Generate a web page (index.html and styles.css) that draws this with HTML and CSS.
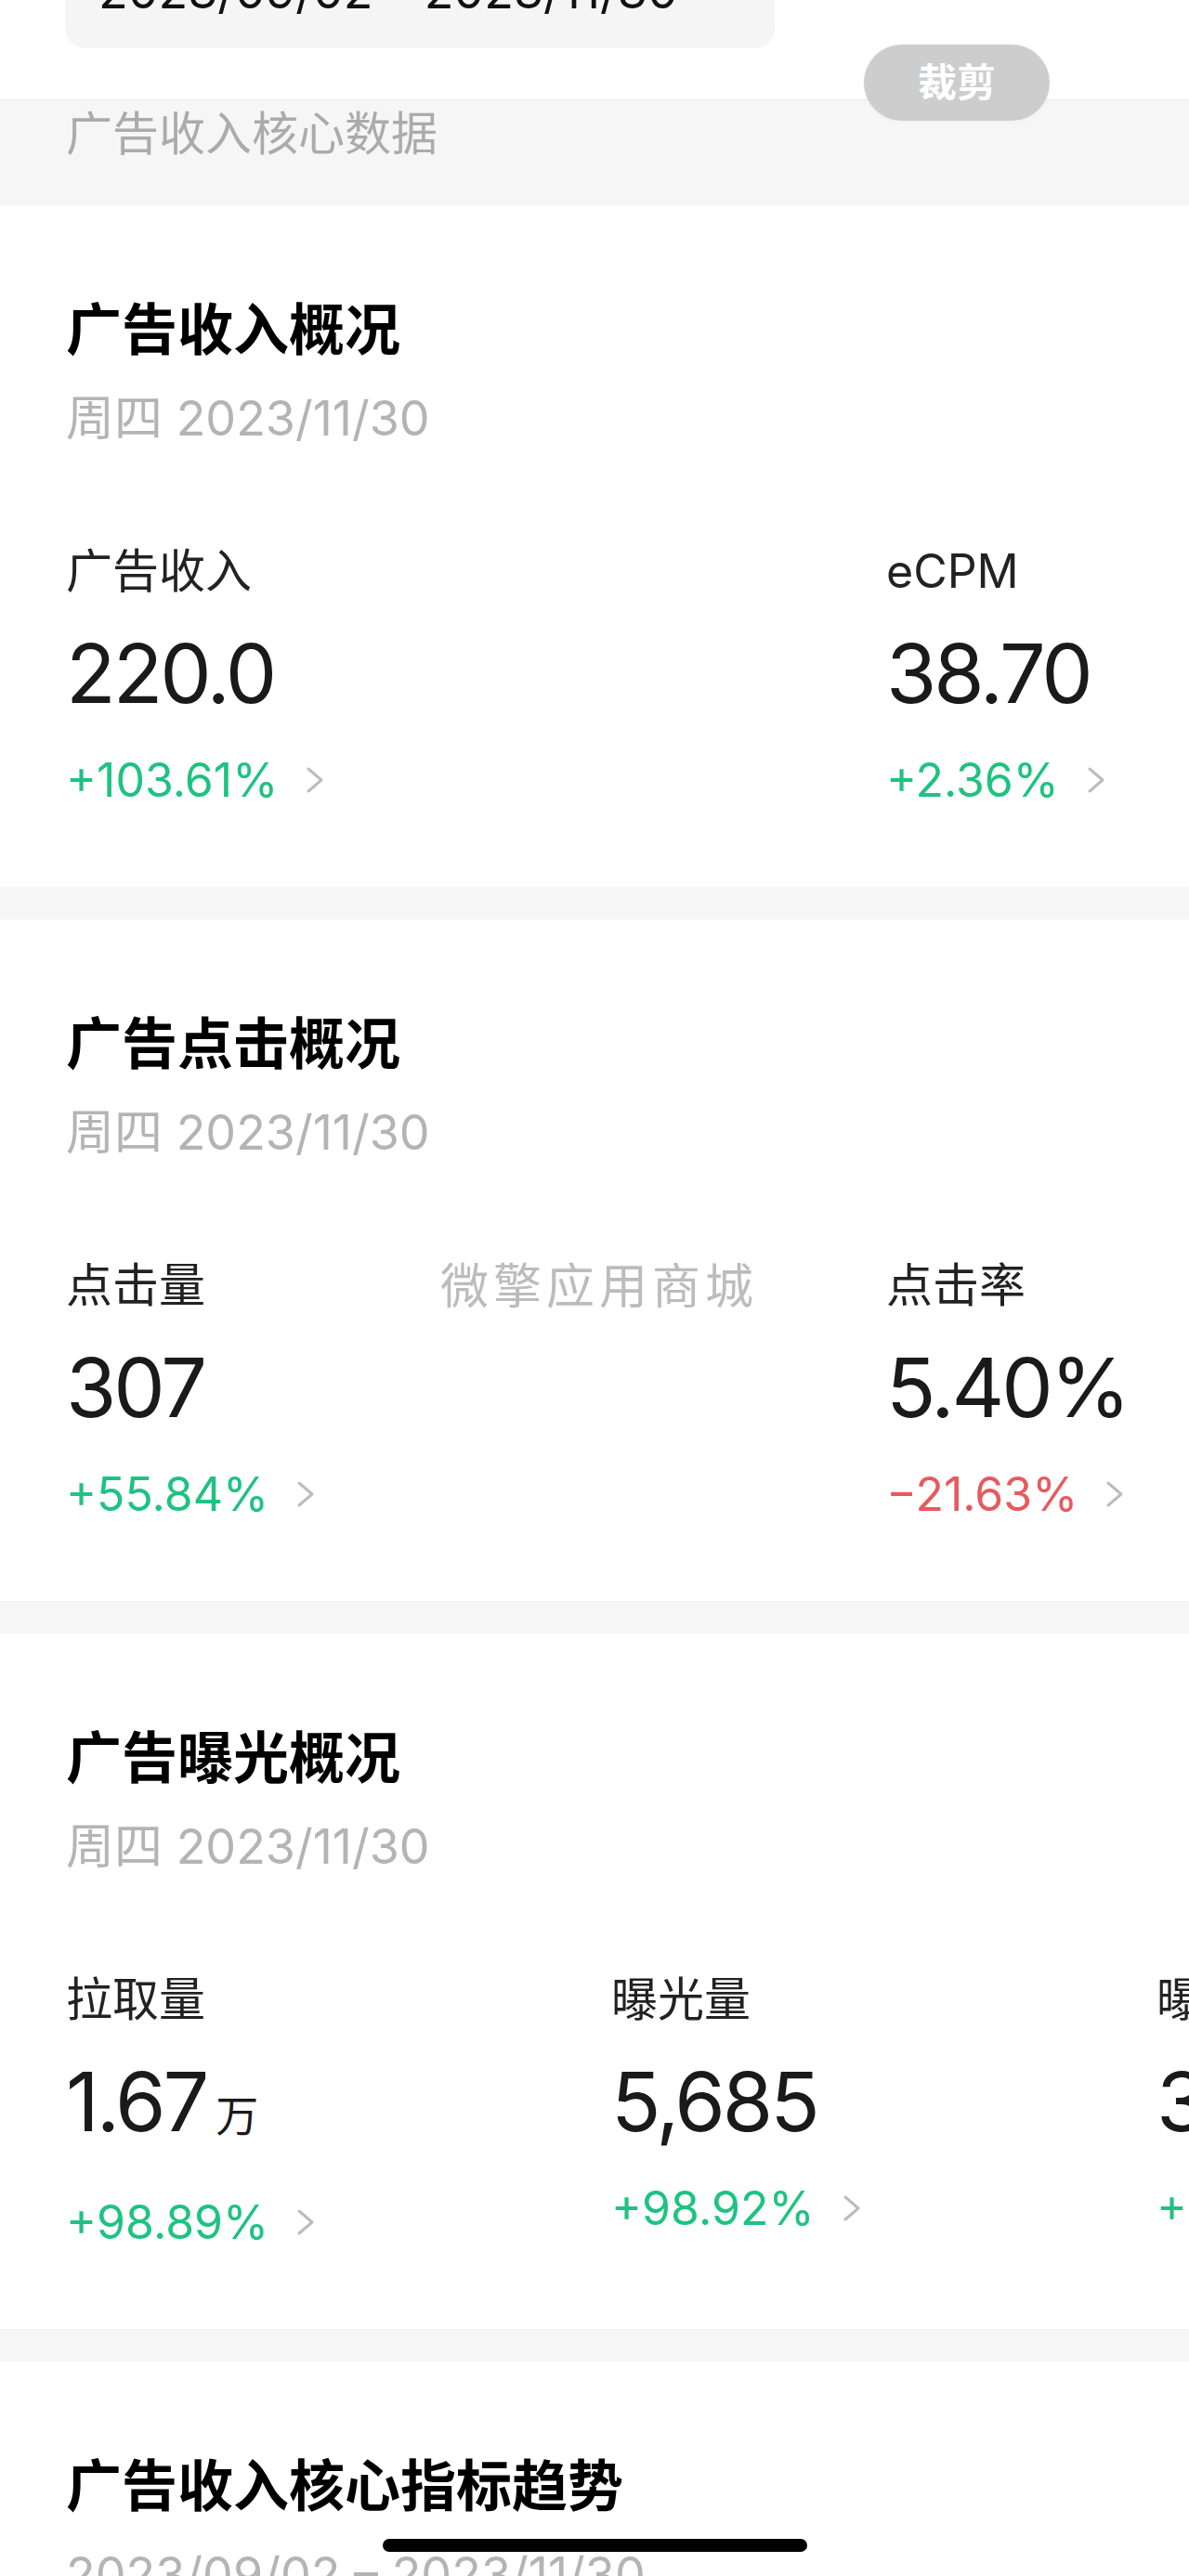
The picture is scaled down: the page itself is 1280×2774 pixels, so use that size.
FILE: index.html
```html
<!DOCTYPE html>
<html lang="zh-CN">

<head>
    <meta charset="UTF-8">
    <meta name="viewport" content="width=device-width, initial-scale=1.0">
    <title>广告收入核心数据</title>
    <link rel="stylesheet" href="styles.css">
</head>

<body>
    <div class="page">
        <div class="range">
            <div class="range-pill">2023/09/02 – 2023/11/30</div>
        </div>
        <div class="crop-btn">裁剪</div>

        <div class="band">广告收入核心数据</div>

        <div class="cards">
            <section class="card">
                <h2 class="card-title">广告收入概况</h2>
                <div class="card-date">周四 2023/11/30</div>
                <div class="metrics metrics-2">
                    <div class="metric">
                        <div class="metric-label">广告收入</div>
                        <div class="metric-value">220.0</div>
                        <div class="metric-change up">+103.61%
                            <svg class="chevron" width="20" height="30" viewBox="0 0 20 30"><polyline points="3,3 17,15 3,27" /></svg>
                        </div>
                    </div>
                    <div class="metric">
                        <div class="metric-label">eCPM</div>
                        <div class="metric-value">38.70</div>
                        <div class="metric-change up">+2.36%
                            <svg class="chevron" width="20" height="30" viewBox="0 0 20 30"><polyline points="3,3 17,15 3,27" /></svg>
                        </div>
                    </div>
                </div>
            </section>

            <section class="card">
                <h2 class="card-title">广告点击概况</h2>
                <div class="card-date">周四 2023/11/30</div>
                <div class="metrics metrics-2">
                    <div class="metric">
                        <div class="metric-label">点击量</div>
                        <div class="metric-value">307</div>
                        <div class="metric-change up">+55.84%
                            <svg class="chevron" width="20" height="30" viewBox="0 0 20 30"><polyline points="3,3 17,15 3,27" /></svg>
                        </div>
                    </div>
                    <div class="metric">
                        <div class="metric-label">点击率</div>
                        <div class="metric-value">5.40%</div>
                        <div class="metric-change down">−21.63%
                            <svg class="chevron" width="20" height="30" viewBox="0 0 20 30"><polyline points="3,3 17,15 3,27" /></svg>
                        </div>
                    </div>
                </div>
                <div class="watermark">微擎应用商城</div>
            </section>

            <section class="card">
                <h2 class="card-title">广告曝光概况</h2>
                <div class="card-date">周四 2023/11/30</div>
                <div class="metrics metrics-3">
                    <div class="metric">
                        <div class="metric-label">拉取量</div>
                        <div class="metric-value">1.67<span class="unit">万</span></div>
                        <div class="metric-change up">+98.89%
                            <svg class="chevron" width="20" height="30" viewBox="0 0 20 30"><polyline points="3,3 17,15 3,27" /></svg>
                        </div>
                    </div>
                    <div class="metric">
                        <div class="metric-label">曝光量</div>
                        <div class="metric-value">5,685</div>
                        <div class="metric-change up">+98.92%
                            <svg class="chevron" width="20" height="30" viewBox="0 0 20 30"><polyline points="3,3 17,15 3,27" /></svg>
                        </div>
                    </div>
                    <div class="metric">
                        <div class="metric-label">曝光率</div>
                        <div class="metric-value">34.04%</div>
                        <div class="metric-change up">+0.02%
                            <svg class="chevron" width="20" height="30" viewBox="0 0 20 30"><polyline points="3,3 17,15 3,27" /></svg>
                        </div>
                    </div>
                </div>
            </section>

            <section class="card">
                <h2 class="card-title">广告收入核心指标趋势</h2>
                <div class="card-date">2023/09/02 – 2023/11/30</div>
            </section>
        </div>

        <div class="home-bar"></div>
    </div>
</body>

</html>
```

FILE: styles.css
```css
html,
body {
    margin: 0;
    padding: 0;
    background-color: #fff;
}

body {
    font-family: Inter, "Noto Sans CJK SC", sans-serif;
}

.page {
    position: relative;
    width: 1280px;
    height: 2774px;
    overflow: hidden;
    background-color: #f6f6f6;
}

/* top date range, mostly scrolled away */
.range {
    display: flow-root;
    height: 107px;
    padding: 0 70px;
    background-color: #fff;
    border-bottom: 1px solid #ebebeb;
}

.range-pill {
    width: 764px;
    height: 140px;
    margin-top: -88px;
    padding: 49px 36px 0;
    box-sizing: border-box;
    background-color: #f5f5f5;
    border-radius: 22px;
    font-size: 52px;
    line-height: 60px;
    color: #111;
}

.crop-btn {
    position: absolute;
    left: 930px;
    top: 48px;
    width: 200px;
    height: 82px;
    border-radius: 41px;
    background-color: #cdcdcd;
    color: #fff;
    font-size: 42px;
    font-weight: 700;
    line-height: 82px;
    text-align: center;
    box-shadow: 0 0 6px rgba(0, 0, 0, 0.04);
}

.band {
    height: 113px;
    padding: 8px 71px 0;
    box-sizing: border-box;
    font-size: 50px;
    line-height: 56px;
    color: #ababab;
}

.cards {
    display: flex;
    flex-direction: column;
    gap: 35px;
}

.card {
    position: relative;
    background-color: #fff;
    padding: 104px 0 90px 71px;
    overflow: hidden;
}

.card-title {
    margin: 0;
    font-size: 60px;
    line-height: 60px;
    font-weight: 700;
    color: #000;
}

.card-date {
    margin-top: 40px;
    font-size: 52px;
    line-height: 52px;
    color: #b4b4b4;
}

.metrics {
    display: flex;
    margin-top: 113px;
}

.metric {
    flex-shrink: 0;
}

.metrics-2 .metric {
    width: 883px;
}

.metrics-3 .metric {
    width: 587px;
}

.metric-label {
    font-size: 50px;
    line-height: 50px;
    color: #222;
}

.metric-value {
    margin-top: 41px;
    font-size: 88px;
    line-height: 88px;
    letter-spacing: -3px;
    color: #1a1a1a;
}

.unit {
    margin-left: 10px;
    font-size: 46px;
    letter-spacing: 0;
}

.metric-change {
    display: flex;
    align-items: center;
    gap: 30px;
    height: 50px;
    margin-top: 46px;
    font-size: 50px;
}

.metric-change.up {
    color: #1fc282;
}

.metric-change.down {
    color: #e65a5e;
}

.chevron polyline {
    fill: none;
    stroke: #bcbcbc;
    stroke-width: 3;
    stroke-linecap: round;
    stroke-linejoin: round;
}

.watermark {
    position: absolute;
    left: 474px;
    top: 368px;
    font-size: 52px;
    letter-spacing: 5px;
    line-height: 56px;
    color: rgba(160, 160, 160, 0.7);
}

.home-bar {
    position: absolute;
    left: 412px;
    top: 2734px;
    width: 457px;
    height: 14px;
    border-radius: 7px;
    background-color: #000;
}
```
